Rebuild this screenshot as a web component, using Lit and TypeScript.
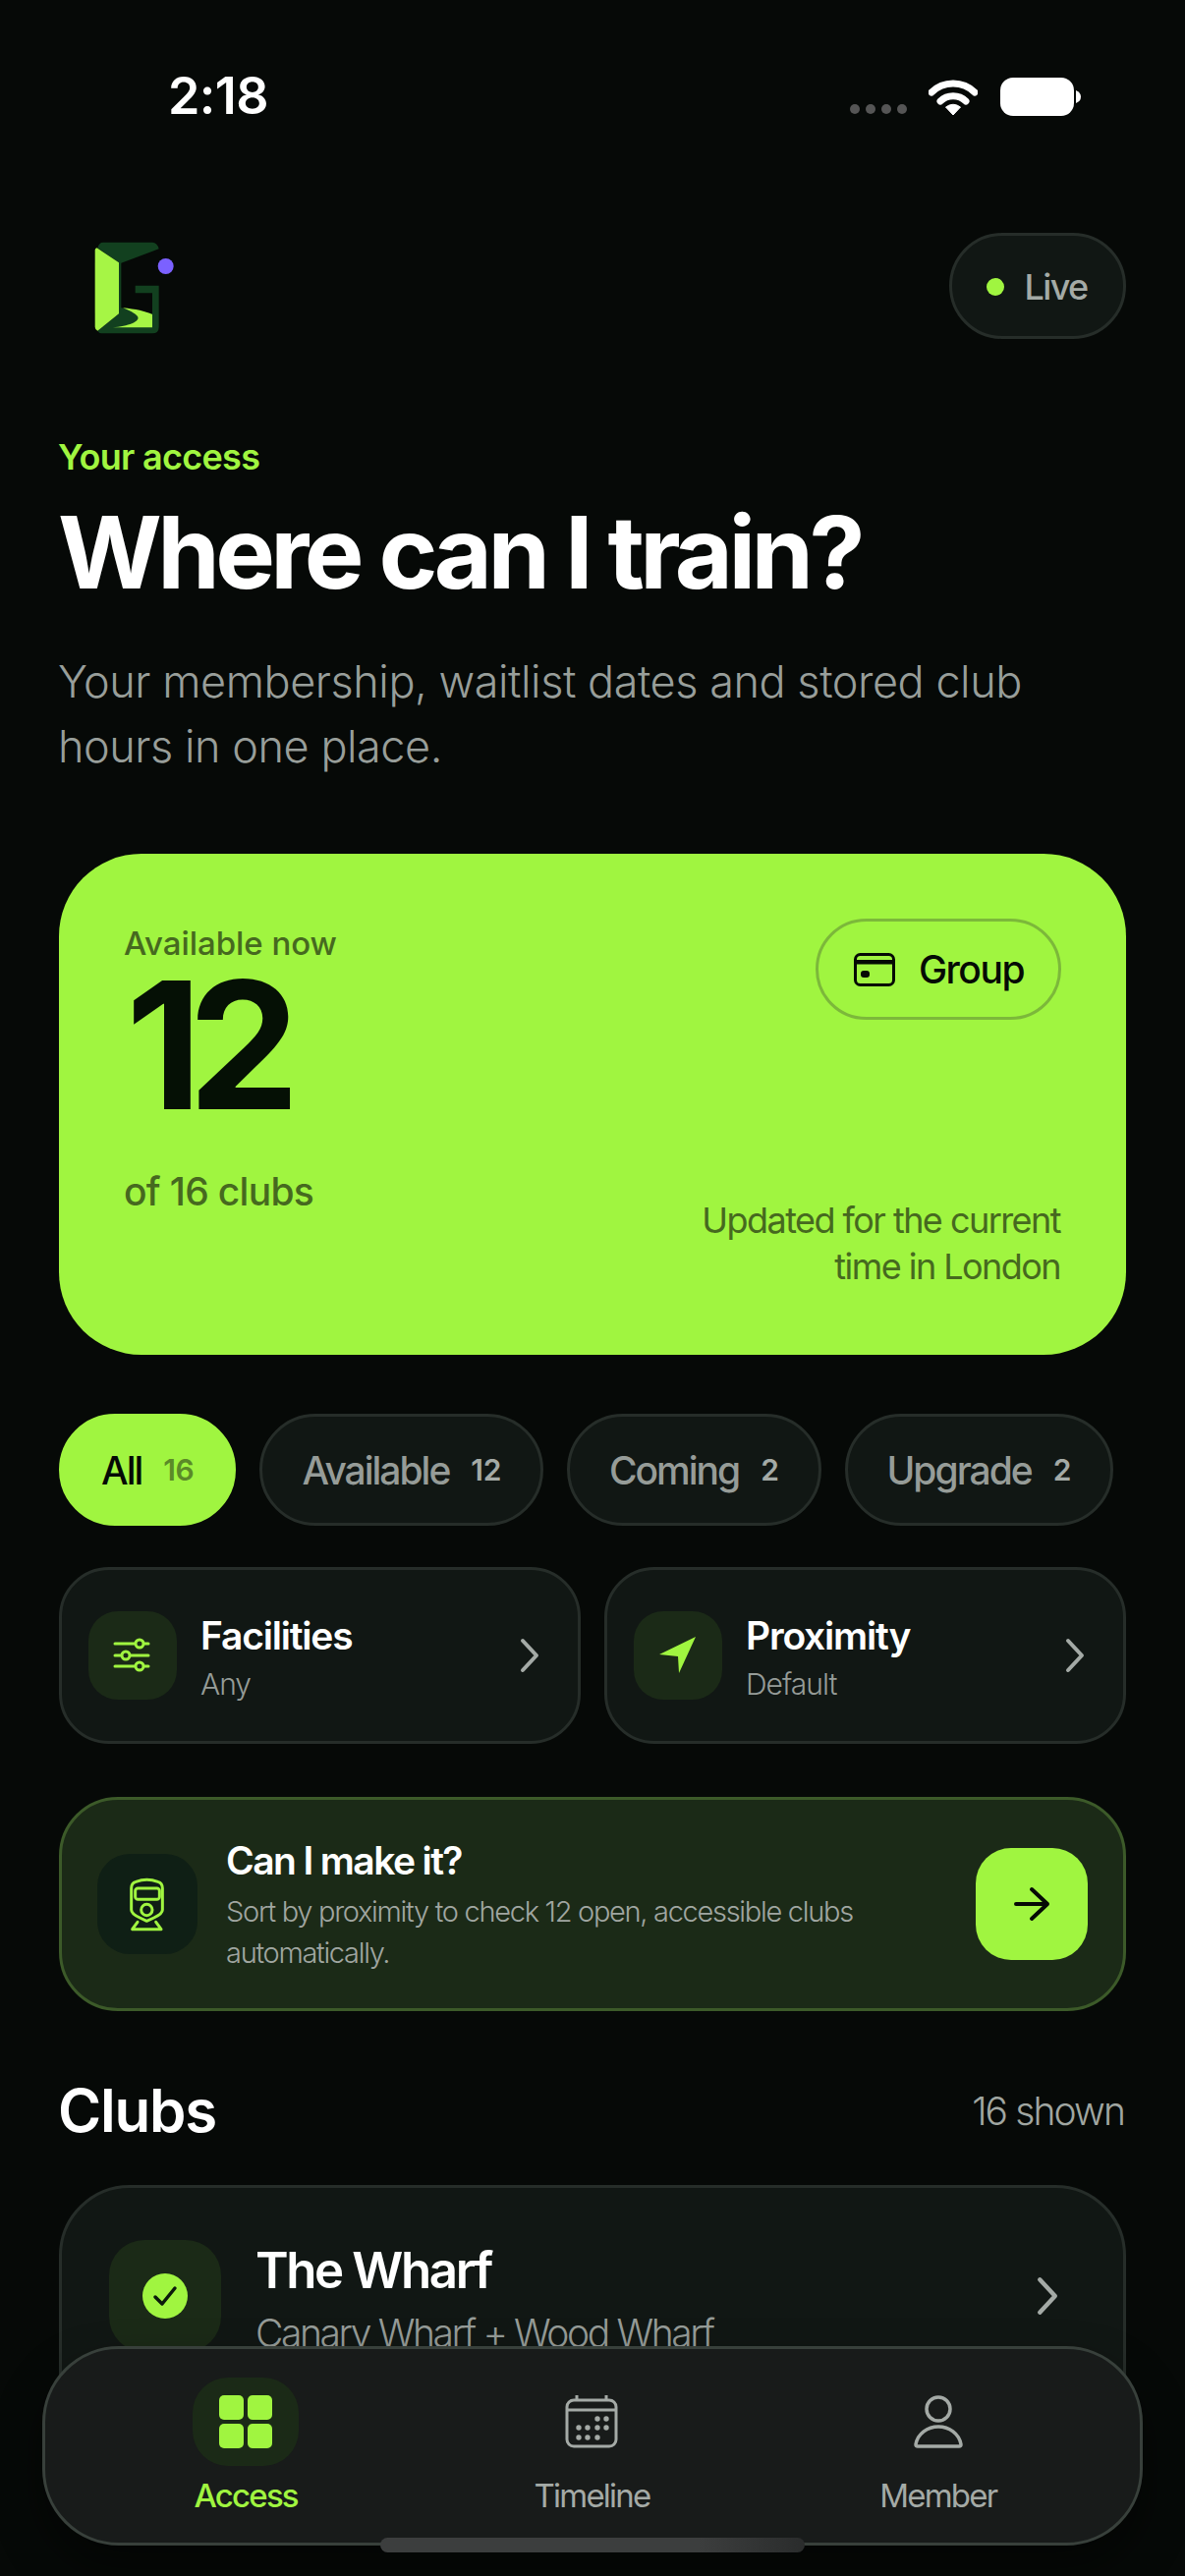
import { LitElement, html, css, svg } from 'lit';
import { customElement } from 'lit/decorators.js';

const chevron = svg`<path d="M3 3l14 15L3 33" fill="none" stroke="currentColor" stroke-width="4" stroke-linecap="round" stroke-linejoin="round"/>`;

@customElement('app-root')
export class AppRoot extends LitElement {
  static styles = css`
    :host {
      display: block;
      position: relative;
      width: 1206px;
      height: 2622px;
      overflow: hidden;
      background: #060907;
      color: #fff;
      font-family: 'Inter', sans-serif;
    }
    svg { display: block; flex: none; }

    .status {
      height: 237px;
      box-sizing: border-box;
      padding: 71px 106px 0 171px;
      display: flex;
      align-items: flex-start;
      justify-content: space-between;
    }
    .time { font-size: 52px; font-weight: 600; line-height: 54px; letter-spacing: -0.6px; }
    .status-icons { display: flex; align-items: flex-start; margin-top: 8px; }
    .dots { display: flex; gap: 6px; margin: 27px 22px 0 0; }
    .dots i { width: 10px; height: 10px; border-radius: 50%; background: #555; }
    .battery { margin-left: 23px; }

    .top {
      display: flex;
      justify-content: space-between;
      padding: 0 60px;
    }
    .live {
      height: 108px;
      width: 180px;
      box-sizing: border-box;
      padding-top: 2px;
      display: flex;
      align-items: center;
      justify-content: center;
      gap: 20px;
      background: #111714;
      border: 3px solid #262d29;
      border-radius: 54px;
      color: #a4aaa6;
      font-size: 36px;
      font-weight: 500;
      letter-spacing: -1.6px;
    }
    .live i { width: 18px; height: 18px; border-radius: 50%; background: #a0f540; margin-left: -1px; }

    .intro { padding: 98px 60px 0; }
    .eyebrow { color: #a0f540; font-size: 36px; font-weight: 600; line-height: 45px; letter-spacing: -0.7px; margin-left: -1px; }
    h1 {
      margin: 16px 0 0 -1px;
      font-size: 102px;
      font-weight: 700;
      line-height: 116px;
      letter-spacing: -4.6px;
    }
    .lede {
      margin: 41px 0 0 -1px;
      font-size: 45px;
      font-weight: 300;
      line-height: 66px;
      letter-spacing: -0.45px;
      color: #989e9a;
    }

    .hero {
      margin: 76px 60px 0;
      height: 510px;
      box-sizing: border-box;
      padding: 66px;
      border-radius: 84px;
      background: #a0f540;
      color: #051005;
      display: flex;
      justify-content: space-between;
    }
    .hero-left, .hero-right {
      display: flex;
      flex-direction: column;
      justify-content: space-between;
    }
    .hero-right { align-items: flex-end; }
    .hero-label { font-size: 33px; font-weight: 500; line-height: 44px; letter-spacing: -0.05px; color: #46691f; margin-top: 3px; }
    .hero-num { font-size: 180px; font-weight: 700; line-height: 146px; letter-spacing: -14px; margin-top: 9px; margin-left: 2px; }
    .hero-of { font-size: 39px; font-weight: 500; line-height: 48px; letter-spacing: -0.7px; color: #46691f; margin-top: 52px; }
    .group {
      height: 103px;
      box-sizing: border-box;
      padding: 0 35px 0 36px;
      display: flex;
      align-items: center;
      gap: 24px;
      border: 3px solid #7cb83a;
      border-radius: 52px;
      font-size: 39px;
      font-weight: 500;
      letter-spacing: -1.5px;
      color: #050a05;
    }
    .hero-note {
      font-size: 36px;
      line-height: 47px;
      letter-spacing: -1.55px;
      text-align: right;
      color: #46691f;
      margin: 0 1px 0 0;
    }

    .filters { display: flex; gap: 24px; padding: 60px 60px 0; }
    .filter {
      height: 114px;
      box-sizing: border-box;
      padding: 0 40px;
      display: flex;
      align-items: center;
      gap: 22px;
      background: #111714;
      border: 3px solid #262d29;
      border-radius: 57px;
      color: #969c98;
      font-size: 39px;
      font-weight: 500;
      letter-spacing: -2px;
    }
    .filter b { font-size: 30px; font-weight: 600; color: #a4aaa6; letter-spacing: -0.4px; }
    .filter.on { background: #a0f540; border-color: #a0f540; color: #050a05; }
    .filter.on b { color: #5b8a28; }

    .options { display: grid; grid-template-columns: 1fr 1fr; gap: 24px; padding: 42px 60px 0; }
    .option {
      height: 180px;
      box-sizing: border-box;
      padding: 0 39px 0 27px;
      display: flex;
      align-items: center;
      gap: 24px;
      background: #111714;
      border: 3px solid #262d29;
      border-radius: 51px;
    }
    .option-icon {
      width: 90px;
      height: 90px;
      border-radius: 30px;
      background: #1b2a17;
      display: flex;
      align-items: center;
      justify-content: center;
      flex: none;
    }
    .option-text { flex: 1; margin-top: 3px; }
    .option-title { font-size: 39px; font-weight: 600; line-height: 50px; letter-spacing: -1.2px; }
    .option-sub { font-size: 30px; font-weight: 300; line-height: 40px; letter-spacing: -1px; color: #969c98; margin-top: 4px; }
    .chev { color: #a4aaa6; }

    .plan {
      margin: 54px 60px 0;
      height: 218px;
      box-sizing: border-box;
      padding: 0 36px;
      display: flex;
      align-items: center;
      gap: 29px;
      background: #1b2a17;
      border: 3px solid #3c5a29;
      border-radius: 60px;
    }
    .plan-icon {
      width: 102px;
      height: 102px;
      border-radius: 33px;
      background: #0f1f15;
      display: flex;
      align-items: center;
      justify-content: center;
      flex: none;
    }
    .plan-text { flex: 1; margin-top: 1px; }
    .plan-title { font-size: 39px; font-weight: 600; line-height: 50px; letter-spacing: -1.6px; }
    .plan-sub { font-size: 29px; font-weight: 300; line-height: 42px; letter-spacing: -1.3px; color: #a0a6a1; margin-top: 6px; }
    .go {
      width: 114px;
      height: 114px;
      border-radius: 36px;
      background: #a0f540;
      display: flex;
      align-items: center;
      justify-content: center;
      flex: none;
    }

    .section {
      display: flex;
      align-items: center;
      justify-content: space-between;
      padding: 66px 60px 0;
    }
    h2 { margin: 0 0 0 -1px; font-size: 60px; font-weight: 600; line-height: 70px; letter-spacing: -1.2px; }
    .shown { font-size: 39px; font-weight: 300; letter-spacing: -1.9px; color: #a0a6a1; margin-right: 2px; }

    .club {
      margin: 41px 60px 0;
      height: 300px;
      box-sizing: border-box;
      padding: 53px 65px 0 48px;
      display: flex;
      align-items: flex-start;
      gap: 35px;
      background: #111714;
      border: 3px solid #262d29;
      border-radius: 72px;
    }
    .club-icon {
      width: 114px;
      height: 114px;
      border-radius: 36px;
      background: #1b2a17;
      display: flex;
      align-items: center;
      justify-content: center;
      flex: none;
    }
    .club-text { flex: 1; }
    .club-title { font-size: 51px; font-weight: 600; line-height: 62px; letter-spacing: -2.4px; }
    .club-sub { font-size: 39px; font-weight: 300; line-height: 50px; letter-spacing: -2.4px; color: #969c98; margin-top: 8px; }
    .club .chev { margin-top: 37px; }

    .tabs {
      position: absolute;
      left: 43px;
      top: 2388px;
      width: 1120px;
      height: 203px;
      box-sizing: border-box;
      padding: 29px 29px 0 28px;
      display: grid;
      grid-template-columns: repeat(3, 1fr);
      background: #181b1a;
      border: 3px solid #38403b;
      border-radius: 78px;
      box-shadow: 0 24px 48px rgba(0, 0, 0, 0.45);
    }
    .tab {
      display: flex;
      flex-direction: column;
      align-items: center;
      color: #a4aaa6;
      font-size: 33px;
      line-height: 40px;
      letter-spacing: -1.8px;
    }
    .tab-icon {
      width: 108px;
      height: 90px;
      border-radius: 36px;
      display: flex;
      align-items: center;
      justify-content: center;
      margin-bottom: 10px;
    }
    .tab.on { color: #a0f540; font-weight: 500; }
    .tab.on .tab-icon { background: #1b2a17; }

    .home {
      position: absolute;
      left: 387px;
      top: 2583px;
      width: 432px;
      height: 15px;
      border-radius: 8px;
      background: linear-gradient(90deg, #3c3e3e 75%, #2a2c2c 100%);
    }
  `;

  private filters = [
    { label: 'All', count: 16, on: true },
    { label: 'Available', count: 12 },
    { label: 'Coming', count: 2 },
    { label: 'Upgrade', count: 2 },
  ];

  private renderLogo() {
    return html`<svg width="120" height="108" viewBox="0 51 360 324">
      <path fill="#12401f" d="M135 80H285Q300 80 305 100L190 143V280L285 298V235H233V212H305V338Q305 358 285 358H130Q122 358 118 350L183 298V142L118 97Q122 80 135 80Z"/>
      <path fill="#a6f545" d="M116 97L183 142V298L118 350Q110 346 110 338V104Q110 98 116 97Z"/>
      <path fill="#a6f545" d="M195 280C235 284 262 290 285 300V340H165C210 336 250 322 240 306C232 296 214 288 195 280Z"/>
      <circle cx="326" cy="153" r="24" fill="#7b61ff"/>
    </svg>`;
  }

  render() {
    return html`
      <div class="status">
        <div class="time">2:18</div>
        <div class="status-icons">
          <div class="dots"><i></i><i></i><i></i><i></i></div>
          <svg width="50" height="38" viewBox="0 0 50 38">
            <path d="M3 15C15 3 35 3 47 15" fill="none" stroke="#fff" stroke-width="7" stroke-linecap="round"/>
            <path d="M12 24C19 17 31 17 38 24" fill="none" stroke="#fff" stroke-width="7" stroke-linecap="round"/>
            <path d="M17.5 30Q25 24.500 32.500 30L25 38Z" fill="#fff" stroke="#fff" stroke-width="1" stroke-linejoin="round"/>
          </svg>
          <svg class="battery" width="82" height="39" viewBox="0 0 82 39">
            <rect x="0" y="0" width="75" height="39" rx="13" fill="#fff"/>
            <path d="M77 13Q82 15 82 19.500Q82 24 77 26Z" fill="#fff"/>
          </svg>
        </div>
      </div>

      <div class="top">
        ${this.renderLogo()}
        <div class="live"><i></i>Live</div>
      </div>

      <div class="intro">
        <div class="eyebrow">Your access</div>
        <h1>Where can I train?</h1>
        <p class="lede">Your membership, waitlist dates and stored club<br />hours in one place.</p>
      </div>

      <div class="hero">
        <div class="hero-left">
          <div>
            <div class="hero-label">Available now</div>
            <div class="hero-num">12</div>
            <div class="hero-of">of 16 clubs</div>
          </div>
        </div>
        <div class="hero-right">
          <div class="group">
            <svg width="42" height="34" viewBox="0 0 42 34" fill="none" stroke="#050a05" stroke-width="3">
              <rect x="1.500" y="1.500" width="39" height="31" rx="5"/>
              <rect x="1.500" y="7" width="39" height="4.500" fill="#050a05" stroke="none"/>
              <rect x="7" y="18" width="9" height="7" rx="3" fill="#050a05" stroke="none"/>
            </svg>
            Group
          </div>
          <div class="hero-note">Updated for the current<br />time in London</div>
        </div>
      </div>

      <div class="filters">
        ${this.filters.map(
          (f) => html`<div class="filter ${f.on ? 'on' : ''}">${f.label}<b>${f.count}</b></div>`,
        )}
      </div>

      <div class="options">
        <div class="option">
          <div class="option-icon">
            <svg width="40" height="36" viewBox="0 0 40 36" fill="none" stroke="#a0f540" stroke-width="3" stroke-linecap="round">
              <path d="M2 6H36M2 18H36M2 29H36"/>
              <circle cx="27" cy="6" r="4" fill="#1b2a17"/>
              <circle cx="13" cy="18" r="4" fill="#1b2a17"/>
              <circle cx="27" cy="29" r="4" fill="#1b2a17"/>
            </svg>
          </div>
          <div class="option-text">
            <div class="option-title">Facilities</div>
            <div class="option-sub">Any</div>
          </div>
          <svg class="chev" width="20" height="36" viewBox="0 0 20 36">${chevron}</svg>
        </div>
        <div class="option">
          <div class="option-icon">
            <svg width="38" height="38" viewBox="0 0 38 38"><path d="M37 0L0 18L19 20L20 37Z" fill="#a0f540"/></svg>
          </div>
          <div class="option-text">
            <div class="option-title">Proximity</div>
            <div class="option-sub">Default</div>
          </div>
          <svg class="chev" width="20" height="36" viewBox="0 0 20 36">${chevron}</svg>
        </div>
      </div>

      <div class="plan">
        <div class="plan-icon">
          <svg width="40" height="56" viewBox="90 66 120 168" fill="none" stroke="#a0f540" stroke-width="9" stroke-linecap="round" stroke-linejoin="round">
            <path d="M115 82Q148 70 182 82Q196 86 196 102V168Q196 180 170 192L148 202L127 192Q101 180 101 168V102Q101 86 115 82Z"/>
            <rect x="113" y="102" width="74" height="34" rx="8"/>
            <circle cx="148" cy="168" r="17"/>
            <path d="M120 205L104 227H192L176 205"/>
          </svg>
        </div>
        <div class="plan-text">
          <div class="plan-title">Can I make it?</div>
          <div class="plan-sub">Sort by proximity to check 12 open, accessible clubs<br />automatically.</div>
        </div>
        <div class="go">
          <svg width="38" height="36" viewBox="0 0 38 36" fill="none" stroke="#050a05" stroke-width="4" stroke-linecap="round" stroke-linejoin="round">
            <path d="M3 18H35M19 3L35 18L19 33"/>
          </svg>
        </div>
      </div>

      <div class="section">
        <h2>Clubs</h2>
        <div class="shown">16 shown</div>
      </div>

      <div class="club">
        <div class="club-icon">
          <svg width="46" height="46" viewBox="0 0 46 46">
            <circle cx="23" cy="23" r="23" fill="#a0f540"/>
            <path d="M13 24L20 31L33 15" fill="none" stroke="#0b1a0b" stroke-width="3.500" stroke-linecap="round" stroke-linejoin="round"/>
          </svg>
        </div>
        <div class="club-text">
          <div class="club-title">The Wharf</div>
          <div class="club-sub">Canary Wharf + Wood Wharf</div>
        </div>
        <svg class="chev" width="24" height="40" viewBox="0 0 20 36">${chevron}</svg>
      </div>

      <nav class="tabs">
        <div class="tab on">
          <div class="tab-icon">
            <svg width="54" height="54" viewBox="0 0 54 54" fill="#a0f540">
              <rect x="0" y="0" width="25" height="25" rx="5"/>
              <rect x="29" y="0" width="25" height="25" rx="5"/>
              <rect x="0" y="29" width="25" height="25" rx="5"/>
              <rect x="29" y="29" width="25" height="25" rx="5"/>
            </svg>
          </div>
          Access
        </div>
        <div class="tab">
          <div class="tab-icon">
            <svg width="54" height="54" viewBox="0 0 54 54" fill="none" stroke="#a4aaa6" stroke-width="3">
              <rect x="2" y="5" width="50" height="47" rx="7"/>
              <path d="M2 15H52M12 0V5M42 0V5"/>
              <g fill="#a4aaa6" stroke="none">
                <circle cx="33" cy="24" r="2.700"/><circle cx="42" cy="24" r="2.700"/>
                <circle cx="14" cy="33" r="2.700"/><circle cx="23" cy="33" r="2.700"/><circle cx="33" cy="33" r="2.700"/><circle cx="42" cy="33" r="2.700"/>
                <circle cx="14" cy="43" r="2.700"/><circle cx="23" cy="43" r="2.700"/><circle cx="33" cy="43" r="2.700"/>
              </g>
            </svg>
          </div>
          Timeline
        </div>
        <div class="tab">
          <div class="tab-icon">
            <svg width="50" height="54" viewBox="0 0 50 54" fill="none" stroke="#a4aaa6" stroke-width="3.500" stroke-linejoin="round">
              <circle cx="25" cy="14" r="12"/>
              <path d="M2 50C4 39 14 32 25 32C36 32 46 39 48 50C48 52 47 52 46 52H4C3 52 2 52 2 50Z"/>
            </svg>
          </div>
          Member
        </div>
      </nav>
      <div class="home"></div>
    `;
  }
}

declare global {
  interface HTMLElementTagNameMap {
    'app-root': AppRoot;
  }
}
